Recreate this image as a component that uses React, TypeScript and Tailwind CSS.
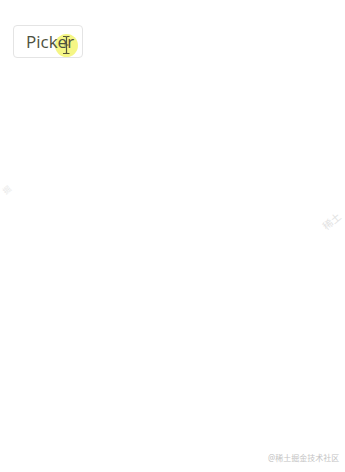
import React from 'react';

const App: React.FC = () => {
  return (
    <div className="relative w-[345px] h-[472px] bg-white overflow-hidden font-['Noto_Sans','Noto_Sans_CJK_SC',sans-serif]">
      <div className="pt-[25px] pl-[13px]">
        <button className="relative flex h-[33px] w-[70px] items-center rounded-[4px] border border-[#e4e4e4] bg-white pl-[12px] text-[17px] leading-none text-[#4d5140] font-['Open_Sans',sans-serif]">
          {/* cursor highlight */}
          <span className="absolute left-[41px] top-[8px] h-[23px] w-[23px] rounded-full bg-[#f2f35c]/75" />
          <span className="relative">Picker</span>
          <svg className="absolute left-[47px] top-[9px]" width="10" height="20" viewBox="0 0 10 20" fill="none" stroke="#55553a" strokeWidth="1.2">
            <path d="M2 1.5h2.5a1 1 0 0 1 1 1v15a1 1 0 0 1-1 1H2M8.5 1.5H6.5a1 1 0 0 0-1 1M8.5 18.5H6.5a1 1 0 0 1-1-1M3.5 10h4" />
          </svg>
        </button>
      </div>

      {/* faint watermarks */}
      <span className="absolute left-[3px] top-[184px] rotate-[-40deg] whitespace-nowrap text-[8px] text-[#e8e8e8]">掘</span>
      <span className="absolute left-[322px] top-[214px] rotate-[-40deg] whitespace-nowrap text-[10px] text-[#e2e2e2]">稀土</span>
      <span className="absolute left-[268px] top-[452px] whitespace-nowrap text-[8px] text-[#c4c4c4]">@稀土掘金技术社区</span>
    </div>
  );
};

export default App;
